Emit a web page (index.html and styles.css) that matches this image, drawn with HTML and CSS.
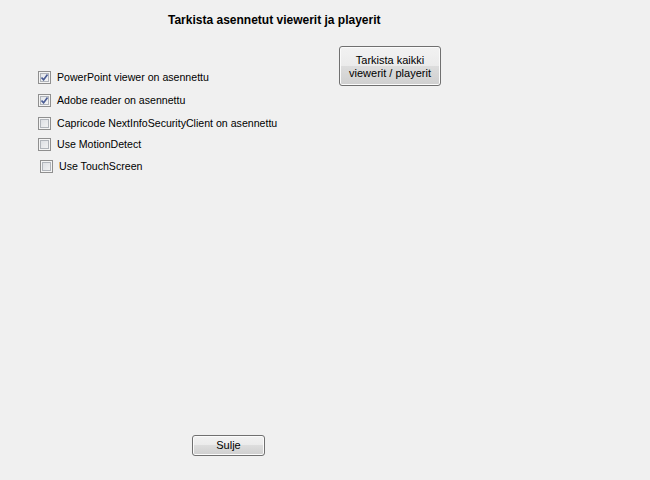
FILE: index.html
```html
<!DOCTYPE html>
<html lang="fi">
<head>
    <meta charset="UTF-8">
    <title>Tarkista asennetut viewerit ja playerit</title>
    <link rel="stylesheet" href="styles.css">
</head>
<body>
    <div class="form">
        <h1 class="title">Tarkista asennetut viewerit ja playerit</h1>

        <div class="content">
            <div class="options">
                <label class="option">
                    <span class="box checked">
                        <svg viewBox="0 0 7 7" width="7" height="7"><path d="M0.5 3.5 L2.6 5.8 L6.5 0.6" fill="none" stroke="#4a5c94" stroke-width="1.6"/></svg>
                    </span>
                    PowerPoint viewer on asennettu
                </label>
                <label class="option">
                    <span class="box checked">
                        <svg viewBox="0 0 7 7" width="7" height="7"><path d="M0.5 3.5 L2.6 5.8 L6.5 0.6" fill="none" stroke="#4a5c94" stroke-width="1.6"/></svg>
                    </span>
                    Adobe reader on asennettu
                </label>
                <label class="option">
                    <span class="box"></span>
                    Capricode NextInfoSecurityClient on asennettu
                </label>
                <label class="option tight">
                    <span class="box"></span>
                    Use MotionDetect
                </label>
                <label class="option tight shifted">
                    <span class="box"></span>
                    Use TouchScreen
                </label>
            </div>

            <button class="win-btn check-all">Tarkista kaikki<br>viewerit / playerit</button>
        </div>

        <div class="footer">
            <button class="win-btn close">Sulje</button>
        </div>
    </div>
</body>
</html>
```

FILE: styles.css
```css
* {
    margin: 0;
    padding: 0;
    box-sizing: border-box;
}

body {
    background: #f0f0f0;
    font-family: 'Liberation Sans', Arial, sans-serif;
    font-size: 10.6px;
    color: #000;
}

.form {
    width: 650px;
    height: 480px;
    display: flex;
    flex-direction: column;
}

.title {
    font-size: 12px;
    font-weight: bold;
    line-height: 14px;
    margin: 13px 0 0 168px;
    height: 14px;
}

.content {
    display: flex;
    align-items: flex-start;
}

.options {
    width: 339px;
    padding: 44px 0 0 38px;
    display: flex;
    flex-direction: column;
}

.option {
    display: flex;
    align-items: center;
    gap: 6px;
    height: 13px;
    line-height: 13px;
    margin-bottom: 10px;
}

.option.tight {
    margin-top: -2px;
}

.option.shifted {
    margin-left: 2px;
    margin-top: -1px;
}

.box {
    width: 13px;
    height: 13px;
    border: 1px solid #8f8f8f;
    box-shadow: inset 0 0 0 1px #f4f4f4, inset 0 0 0 2px #b0b4ba;
    background-image: linear-gradient(135deg, #d8dbe0, #f6f6f6);
    display: flex;
    align-items: center;
    justify-content: center;
    flex-shrink: 0;
}

.box.checked {
    background-image: linear-gradient(135deg, #dfe2e7, #f8f8f8);
}

.win-btn {
    font-family: 'Liberation Sans', Arial, sans-serif;
    font-size: 11px;
    line-height: 13px;
    color: #000;
    border: 1px solid #707070;
    border-radius: 3px;
    background: linear-gradient(#f2f2f2 0%, #ebebeb 50%, #dddddd 50%, #cfcfcf 100%);
    box-shadow: inset 0 0 0 1px #fbfbfb;
}

.check-all {
    width: 102px;
    height: 40px;
    margin-top: 19px;
    padding-top: 1px;
}

.footer {
    margin-top: auto;
    padding: 0 0 24px 192px;
}

.close {
    width: 73px;
    height: 21px;
}
```
